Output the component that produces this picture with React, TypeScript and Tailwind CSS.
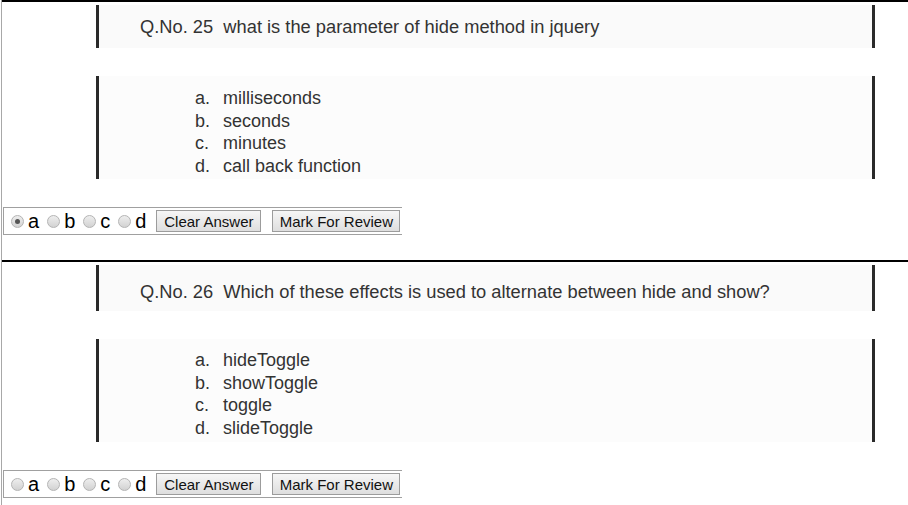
const questions = [
  {
    no: 25,
    text: "what is the parameter of hide method in jquery",
    options: ["milliseconds", "seconds", "minutes", "call back function"],
    picked: "a",
    qh: "h-[43px]",
    qpad: "pt-0",
    opad: "pt-[11px]",
  },
  {
    no: 26,
    text: "Which of these effects is used to alternate between hide and show?",
    options: ["hideToggle", "showToggle", "toggle", "slideToggle"],
    picked: "",
    qh: "h-[46px]",
    qpad: "pt-[8px]",
    opad: "pt-[10px]",
  },
];

const Radio = ({ checked }: { checked: boolean }) => (
  <span className="w-[13px] h-[13px] rounded-full border border-[#b4b4b4] bg-gradient-to-b from-[#eeeeee] to-[#d2d2d2] flex items-center justify-center">
    {checked && <span className="w-[5px] h-[5px] rounded-full bg-[#555]" />}
  </span>
);

const Bar = () => <div className="w-[3px] bg-[#2a2a2a]" />;

const Question = ({ q }: { q: (typeof questions)[number] }) => {
  return (
    <div className="border-t-2 border-black">
      <div className={`mt-[3px] flex ${q.qh}`}>
        <div className="w-[94px]" />
        <Bar />
        <div className={`w-[773px] bg-[#fafafa] flex items-center pl-[41px] text-[18.3px] text-[#333] ${q.qpad}`}>
          Q.No. {q.no}&nbsp; {q.text}
        </div>
        <Bar />
      </div>
      <div className="mt-[28px] flex h-[103px]">
        <div className="w-[94px]" />
        <Bar />
        <div className={`w-[773px] bg-[#fcfcfc] flex flex-col pl-[96px] text-[18px] leading-[22.7px] text-[#333] ${q.opad}`}>
          {q.options.map((o, i) => (
            <div key={o} className="flex">
              <span className="w-[28px]">{"abcd"[i]}.</span>
              <span>{o}</span>
            </div>
          ))}
        </div>
        <Bar />
      </div>
      <div className="mt-[28px] ml-[1px] w-[399px] h-[28px] border border-[#a0a0a0] border-r-0 flex items-center pl-[7px]">
        {["a", "b", "c", "d"].map((l) => (
          <label key={l} className="flex items-center gap-[4px] mr-[8px] text-[20px] leading-none text-black">
            <Radio checked={q.picked === l} />
            <span className="-mt-[1px]">{l}</span>
          </label>
        ))}
        <button className="ml-[2px] w-[105px] h-[22px] border border-[#9c9c9c] bg-gradient-to-b from-[#f6f6f6] to-[#dedede] text-[15px] leading-none text-[#111]">
          Clear Answer
        </button>
        <button className="ml-[11px] w-[128px] h-[22px] border border-[#9c9c9c] bg-gradient-to-b from-[#f6f6f6] to-[#dedede] text-[15px] leading-none text-[#111]">
          Mark For Review
        </button>
      </div>
      <div className="h-[25px]" />
    </div>
  );
};

const App = () => {
  return (
    <div
      className="w-[908px] h-[505px] overflow-hidden bg-white"
      style={{ fontFamily: '"Liberation Sans", Arial, sans-serif' }}
    >
      <div className="ml-[1px] border-l border-[#a8a8a8] h-full">
        {questions.map((q) => (
          <Question key={q.no} q={q} />
        ))}
      </div>
    </div>
  );
};

export default App;
